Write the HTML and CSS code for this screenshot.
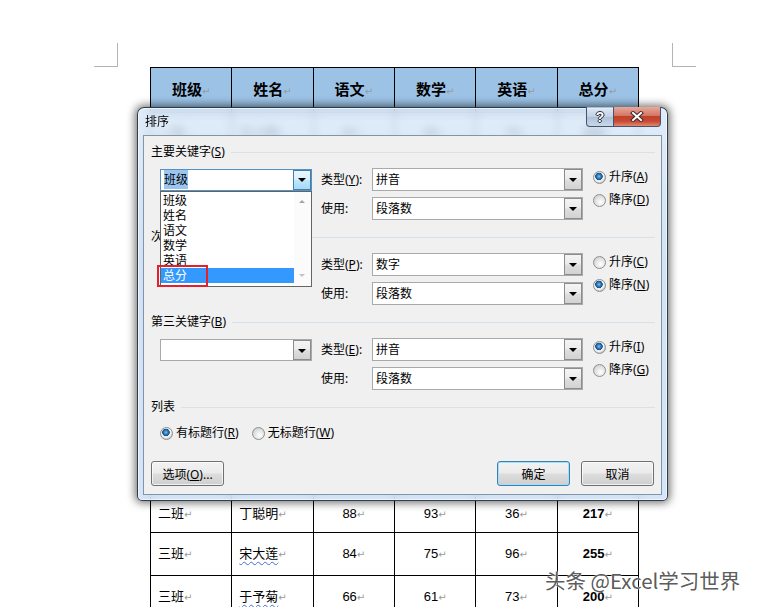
FILE: index.html
```html
<!DOCTYPE html>
<html lang="zh-CN">
<head>
    <meta charset="UTF-8">
    <title>排序</title>
    <link rel="stylesheet" href="styles.css">
</head>
<body>
<div class="page">

    <div class="marks">
        <div class="mark mark-left"></div>
        <div class="mark mark-right"></div>
    </div>

    <table class="score">
        <tr class="head">
            <th>班级<i>↵</i></th><th>姓名<i>↵</i></th><th>语文<i>↵</i></th>
            <th>数学<i>↵</i></th><th>英语<i>↵</i></th><th>总分<i>↵</i></th>
        </tr>
        <tr><td>一班<i>↵</i></td><td>王小明<i>↵</i></td><td>92<i>↵</i></td><td>85<i>↵</i></td><td>78<i>↵</i></td><td><b>255</b><i>↵</i></td></tr>
        <tr><td>一班<i>↵</i></td><td>李晓华<i>↵</i></td><td>76<i>↵</i></td><td>88<i>↵</i></td><td>90<i>↵</i></td><td><b>254</b><i>↵</i></td></tr>
        <tr><td>一班<i>↵</i></td><td>赵文静<i>↵</i></td><td>85<i>↵</i></td><td>79<i>↵</i></td><td>82<i>↵</i></td><td><b>246</b><i>↵</i></td></tr>
        <tr><td>一班<i>↵</i></td><td>刘志强<i>↵</i></td><td>90<i>↵</i></td><td>72<i>↵</i></td><td>86<i>↵</i></td><td><b>248</b><i>↵</i></td></tr>
        <tr><td>二班<i>↵</i></td><td>陈佳怡<i>↵</i></td><td>68<i>↵</i></td><td>95<i>↵</i></td><td>77<i>↵</i></td><td><b>240</b><i>↵</i></td></tr>
        <tr><td>二班<i>↵</i></td><td>周子豪<i>↵</i></td><td>81<i>↵</i></td><td>84<i>↵</i></td><td>69<i>↵</i></td><td><b>234</b><i>↵</i></td></tr>
        <tr><td>二班<i>↵</i></td><td>吴思远<i>↵</i></td><td>73<i>↵</i></td><td>66<i>↵</i></td><td>91<i>↵</i></td><td><b>230</b><i>↵</i></td></tr>
        <tr><td>二班<i>↵</i></td><td>孙小美<i>↵</i></td><td>88<i>↵</i></td><td>77<i>↵</i></td><td>65<i>↵</i></td><td><b>230</b><i>↵</i></td></tr>
        <tr><td>二班<i>↵</i></td><td>郑国庆<i>↵</i></td><td>70<i>↵</i></td><td>82<i>↵</i></td><td>74<i>↵</i></td><td><b>226</b><i>↵</i></td></tr>
        <tr class="low"><td>二班<i>↵</i></td><td>丁聪明<i>↵</i></td><td>88<i>↵</i></td><td>93<i>↵</i></td><td>36<i>↵</i></td><td><b>217</b><i>↵</i></td></tr>
        <tr class="tall"><td>三班<i>↵</i></td><td><span class="typo">宋大莲</span><i>↵</i></td><td>84<i>↵</i></td><td>75<i>↵</i></td><td>96<i>↵</i></td><td><b>255</b><i>↵</i></td></tr>
        <tr class="tall"><td>三班<i>↵</i></td><td><span class="typo">于予菊</span><i>↵</i></td><td>66<i>↵</i></td><td>61<i>↵</i></td><td>73<i>↵</i></td><td><b>200</b><i>↵</i></td></tr>
    </table>

    <!-- 排序 对话框 -->
    <div class="dialog">
        <div class="titlebar">
            <span class="title">排序</span>
            <div class="caption-btns">
                <span class="cap-help">?</span>
                <span class="cap-close">
                    <svg width="14" height="11" viewBox="0 0 14 11">
                        <path d="M3 2 L11 9 M11 2 L3 9" stroke="#3a2a2a" stroke-width="4" stroke-linecap="square" fill="none"/>
                        <path d="M3 2 L11 9 M11 2 L3 9" stroke="#ffffff" stroke-width="2" stroke-linecap="square" fill="none"/>
                    </svg>
                </span>
            </div>
        </div>

        <div class="client">
            <div class="section">
                <div class="sec-head"><span>主要关键字(<u>S</u>)</span></div>
                <div class="sec-body">
                    <div class="key-col">
                        <div class="combo key focus"><span class="val"><span class="sel">班级</span></span><span class="drop"></span></div>
                    </div>
                    <div class="type-col">
                        <div class="row"><label>类型(<u>Y</u>):</label><div class="combo"><span class="val">拼音</span><span class="drop"></span></div></div>
                        <div class="row"><label>使用:</label><div class="combo"><span class="val">段落数</span><span class="drop"></span></div></div>
                    </div>
                    <div class="order-col">
                        <div class="radio on"><span class="dot"></span><span>升序(<u>A</u>)</span></div>
                        <div class="radio"><span class="dot"></span><span>降序(<u>D</u>)</span></div>
                    </div>
                </div>
            </div>

            <div class="section">
                <div class="sec-head"><span>次要关键字(<u>O</u>)</span></div>
                <div class="sec-body">
                    <div class="key-col">
                        <div class="combo key"><span class="val">总分</span><span class="drop"></span></div>
                    </div>
                    <div class="type-col">
                        <div class="row"><label>类型(<u>P</u>):</label><div class="combo"><span class="val">数字</span><span class="drop"></span></div></div>
                        <div class="row"><label>使用:</label><div class="combo"><span class="val">段落数</span><span class="drop"></span></div></div>
                    </div>
                    <div class="order-col">
                        <div class="radio"><span class="dot"></span><span>升序(<u>C</u>)</span></div>
                        <div class="radio on"><span class="dot"></span><span>降序(<u>N</u>)</span></div>
                    </div>
                </div>
            </div>

            <div class="section">
                <div class="sec-head"><span>第三关键字(<u>B</u>)</span></div>
                <div class="sec-body">
                    <div class="key-col">
                        <div class="combo key"><span class="val"></span><span class="drop"></span></div>
                    </div>
                    <div class="type-col">
                        <div class="row"><label>类型(<u>E</u>):</label><div class="combo"><span class="val">拼音</span><span class="drop"></span></div></div>
                        <div class="row"><label>使用:</label><div class="combo"><span class="val">段落数</span><span class="drop"></span></div></div>
                    </div>
                    <div class="order-col">
                        <div class="radio on"><span class="dot"></span><span>升序(<u>I</u>)</span></div>
                        <div class="radio"><span class="dot"></span><span>降序(<u>G</u>)</span></div>
                    </div>
                </div>
            </div>

            <div class="section list-sec">
                <div class="sec-head"><span>列表</span></div>
                <div class="list-opts">
                    <div class="radio on"><span class="dot"></span><span>有标题行(<u>R</u>)</span></div>
                    <div class="radio"><span class="dot"></span><span>无标题行(<u>W</u>)</span></div>
                </div>
            </div>

            <div class="buttons">
                <button>选项(<u>O</u>)...</button>
                <span class="spacer"></span>
                <button class="default">确定</button>
                <button>取消</button>
            </div>

            <!-- 展开的下拉列表 -->
            <div class="droplist">
                <ul>
                    <li>班级</li>
                    <li>姓名</li>
                    <li>语文</li>
                    <li>数学</li>
                    <li>英语</li>
                    <li class="hl">总分</li>
                </ul>
                <div class="scroll"><span class="up"></span><span class="down"></span></div>
            </div>
            <div class="red-box"></div>
        </div>
    </div>

    <div class="watermark">头条 @Excel学习世界</div>
</div>
</body>
</html>
```

FILE: styles.css
```css
body {
    margin: 0;
    background: #fff;
    font-family: "Noto Sans", "Noto Sans CJK SC", sans-serif;
}
.page {
    position: relative;
    width: 758px;
    height: 607px;
    overflow: hidden;
    background: #fff;
}
.marks {
    display: flex;
    justify-content: space-between;
    height: 67px;
    padding: 43px 62px 0 94px;
    box-sizing: border-box;
}
.mark {
    width: 24px;
    height: 24px;
    box-sizing: border-box;
    border-bottom: 1px solid #b4b4b4;
}
.mark-left {
    border-right: 1px solid #b4b4b4;
}
.mark-right {
    border-left: 1px solid #b4b4b4;
}

/* 成绩表 */
.score {
    margin-left: 150px;
    width: 489px;
    table-layout: fixed;
    border-collapse: collapse;
    font-family: "Liberation Sans", "Noto Sans CJK SC", sans-serif;
    font-size: 13px;
    color: #000;
}
.score th, .score td {
    border: 1px solid #000;
    padding: 0;
    text-align: center;
    height: 41px;
    line-height: 16px;
}
.score .head th {
    height: 42px;
    padding-top: 2px;
    background: #9cc3e6;
    font-size: 15px;
    font-weight: bold;
}
.score tr.low td {
    padding-top: 5px;
    height: 36px;
}
.score tr.tall td {
    height: 42px;
}
.score td:nth-child(1), .score td:nth-child(2) {
    text-align: left;
    padding-left: 7px;
}
.score i {
    font-style: normal;
    font-weight: normal;
    font-family: "DejaVu Sans", sans-serif;
    font-size: 10px;
    color: #9a9a9a;
}
.typo {
    text-decoration: underline wavy #3f6fd6;
    text-decoration-thickness: 1px;
    text-underline-offset: 3px;
}

/* 对话框 */
.dialog {
    position: absolute;
    left: 137px;
    top: 107px;
    width: 531px;
    height: 394px;
    box-sizing: border-box;
    border: 1px solid rgba(20, 30, 45, 0.85);
    border-radius: 7px 7px 5px 5px;
    background: linear-gradient(180deg, rgba(214, 230, 247, 0.78), rgba(190, 214, 240, 0.70) 40%, rgba(200, 222, 245, 0.78));
    -webkit-backdrop-filter: blur(4px);
    backdrop-filter: blur(4px);
    box-shadow: 0 0 9px 2px rgba(0, 0, 0, 0.55), inset 0 0 0 1px rgba(255, 255, 255, 0.6);
    font-size: 12px;
    color: #000;
}
.titlebar {
    position: relative;
    height: 27px;
}
.title {
    display: block;
    padding-left: 7px;
    line-height: 27px;
}
.caption-btns {
    position: absolute;
    top: -1px;
    right: 6px;
    display: flex;
    height: 20px;
}
.cap-help, .cap-close {
    display: flex;
    align-items: center;
    justify-content: center;
    box-sizing: border-box;
    height: 20px;
    border: 1px solid #48536a;
    border-top: none;
}
.cap-help {
    width: 28px;
    border-radius: 0 0 0 4px;
    background: linear-gradient(180deg, rgba(235, 242, 250, 0.7), rgba(185, 202, 222, 0.75) 50%, rgba(160, 180, 205, 0.8) 51%, rgba(195, 212, 232, 0.8));
    color: #fff;
    font-family: "Liberation Sans", sans-serif;
    font-weight: bold;
    font-size: 14px;
    text-shadow: 0 0 1px #2c3440, 1px 0 0 #2c3440, -1px 0 0 #2c3440, 0 1px 0 #2c3440, 0 -1px 0 #2c3440;
}
.cap-close {
    width: 47px;
    border-left: none;
    border-radius: 0 0 4px 0;
    background: linear-gradient(180deg, #e8a89a, #d37664 45%, #c2402a 50%, #c74a33 75%, #e08a6e);
}
.client {
    position: relative;
    margin: 0 5px;
    height: 360px;
    box-sizing: border-box;
    border: 1px solid #8393a8;
    background: #f0f0f0;
    padding-top: 8px;
}

.section {
    height: 85px;
    padding-right: 6px;
    box-sizing: border-box;
}
.sec-head {
    display: flex;
    align-items: center;
    gap: 6px;
    height: 16px;
    padding-left: 7px;
    line-height: 16px;
}
.sec-head::after {
    content: "";
    flex: 1;
    height: 1px;
    background: #d8e1e8;
}
.sec-body {
    display: flex;
    margin-top: 8px;
    padding-left: 16px;
}
.key-col {
    width: 152px;
}
.type-col {
    display: flex;
    flex-direction: column;
    gap: 6px;
    margin-left: 9px;
}
.row {
    display: flex;
}
.row label {
    width: 51px;
    line-height: 23px;
}
.combo {
    display: flex;
    width: 211px;
    height: 23px;
    box-sizing: border-box;
    border: 1px solid #a9a9a9;
    background: #fff;
}
.combo.key {
    width: 152px;
    height: 22px;
    margin-top: 1px;
}
.combo .val {
    flex: 1;
    padding-left: 3px;
    line-height: 21px;
    white-space: nowrap;
}
.combo.key .val {
    line-height: 20px;
}
.combo .drop {
    position: relative;
    width: 16px;
    border: 1px solid #8c8c8c;
    background: linear-gradient(180deg, #f4f4f4, #ececec 48%, #dedede 52%, #d2d2d2);
}
.combo .drop::after {
    content: "";
    position: absolute;
    left: 4px;
    top: 8px;
    border-left: 4px solid transparent;
    border-right: 4px solid transparent;
    border-top: 4px solid #000;
}
.combo.focus {
    border-color: #5a8fc2;
}
.combo.focus .drop {
    border-color: #3c7fb1;
    background: linear-gradient(180deg, #eaf6fd, #d9f0fc 48%, #bee6fd 52%, #a7d9f5);
}
.combo.focus .drop::after {
    top: 7px;
}
.sel {
    background: #99c5f0;
    padding: 1px 0;
}

.order-col {
    display: flex;
    flex-direction: column;
    gap: 7px;
    margin-left: 10px;
    padding-top: 1px;
}
.radio {
    display: flex;
    align-items: center;
    gap: 3px;
    height: 16px;
    line-height: 16px;
    white-space: nowrap;
}
.radio .dot {
    width: 13px;
    height: 13px;
    box-sizing: border-box;
    border: 1px solid #8e8f8f;
    border-radius: 50%;
    background: radial-gradient(circle at 60% 65%, #ffffff, #e6e6e6 45%, #c4c4c4);
}
.radio.on .dot {
    background: radial-gradient(circle at 45% 40%, #7cc8f3 0, #2a7cbf 2px, #1a4f86 3.5px, #e8e8e8 4px, #f6f6f6 5px, #cfcfcf 6px);
}

.list-sec {
    height: 42px;
}
.list-opts {
    display: flex;
    gap: 13px;
    margin-top: 10px;
    padding-left: 16px;
}

.buttons {
    display: flex;
    gap: 11px;
    margin-top: 20px;
    padding: 0 7px;
}
.buttons .spacer {
    flex: 1;
}
button {
    width: 73px;
    height: 25px;
    padding: 0;
    border: 1px solid #707070;
    border-radius: 3px;
    background: linear-gradient(180deg, #f2f2f2, #ebebeb 48%, #dddddd 52%, #cfcfcf);
    box-shadow: inset 0 0 0 1px rgba(255, 255, 255, 0.7);
    font-family: "Noto Sans", "Noto Sans CJK SC", sans-serif;
    font-size: 12px;
    color: #000;
}
button.default {
    border-color: #3c7fb1;
    box-shadow: inset 0 0 0 1px #9fe0fb;
}

.droplist {
    position: absolute;
    left: 16px;
    top: 55px;
    display: flex;
    width: 152px;
    height: 96px;
    box-sizing: border-box;
    border: 1px solid #646464;
    background: #fff;
}
.droplist ul {
    flex: 1;
    margin: 0;
    padding: 1px 0 0;
    list-style: none;
}
.droplist li {
    height: 15px;
    line-height: 15px;
    padding-left: 2px;
}
.droplist li.hl {
    background: #3399ff;
    color: #fff;
}
.scroll {
    position: relative;
    width: 17px;
    background: #fbfbfb;
}
.scroll span {
    position: absolute;
    left: 5px;
    border-left: 3px solid transparent;
    border-right: 3px solid transparent;
}
.scroll .up {
    top: 8px;
    border-bottom: 3px solid #a6a6a6;
}
.scroll .down {
    bottom: 9px;
    border-top: 3px solid #c4c4c4;
}
.red-box {
    position: absolute;
    left: 13px;
    top: 129px;
    width: 51px;
    height: 22px;
    box-sizing: border-box;
    border: 2px solid #e3202c;
}

.watermark {
    position: absolute;
    left: 545px;
    top: 566px;
    font-family: "Noto Sans CJK SC", sans-serif;
    font-size: 20.5px;
    line-height: 28px;
    color: rgba(70, 70, 70, 0.9);
    text-shadow: 0 0 2px #fff, 0 0 1px #fff;
    white-space: nowrap;
}
```
